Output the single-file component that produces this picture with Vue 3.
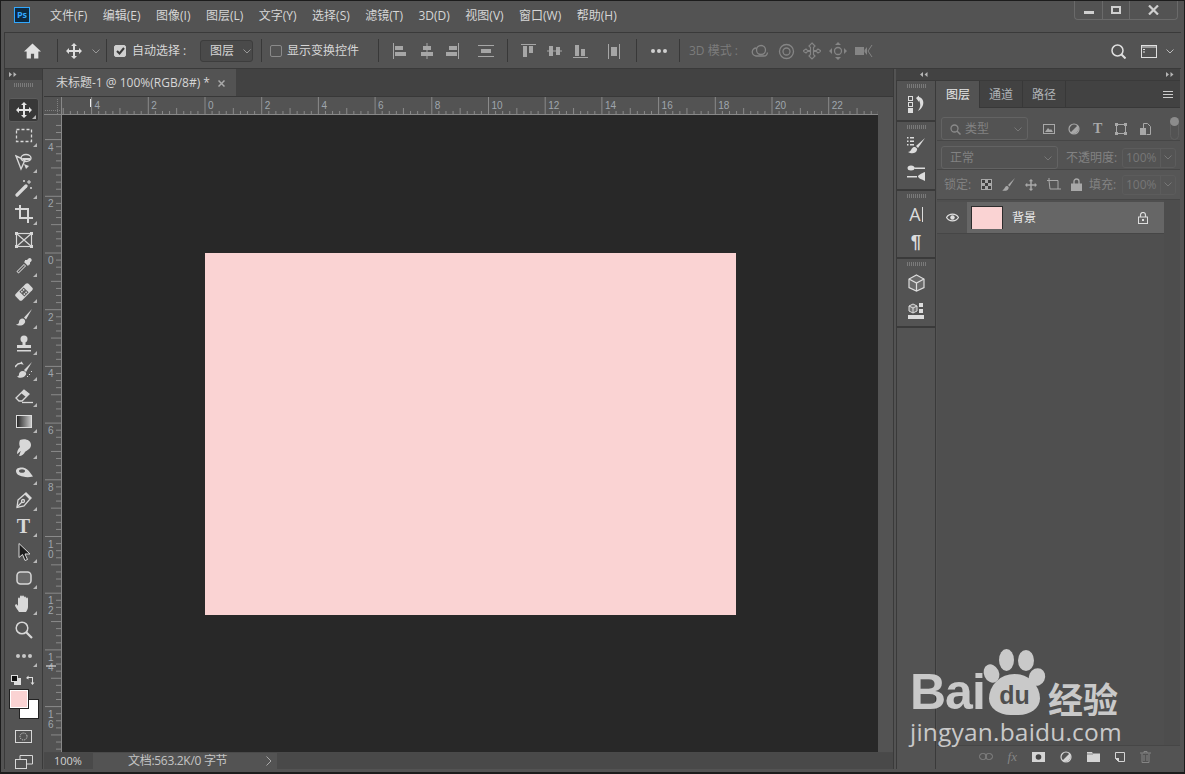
<script setup>
const menus = ["文件(F)", "编辑(E)", "图像(I)", "图层(L)", "文字(Y)", "选择(S)", "滤镜(T)", "3D(D)", "视图(V)", "窗口(W)", "帮助(H)"];

// ruler: 28.35px per cm, one tick every quarter cm
const CM = 28.35;
const hTicks = [];
for (let i = -20; i <= 95; i++) {
  hTicks.push({ x: 143 + (i * CM) / 4, major: i % 8 === 0, mid: i % 4 === 0, label: Math.abs(i / 4) });
}
const vTicks = [];
for (let i = -18; i <= 71; i++) {
  const label = String(Math.abs(i / 4));
  vTicks.push({ y: 138 + (i * CM) / 4, major: i % 8 === 0, mid: i % 4 === 0, digits: label.split("") });
}
</script>

<template>
  <div class="window">
    <!-- Menu -->
    <header class="menubar">
      <div class="ps-logo">Ps</div>
      <nav class="menus">
        <span v-for="m in menus" :key="m">{{ m }}</span>
      </nav>
      <div class="win-controls">
        <div class="win-btn min"><i></i></div>
        <div class="win-btn max"><i></i></div>
        <div class="win-btn close">
          <svg width="11" height="10" viewBox="0 0 11 10"><path d="M1 0.5l9 9M10 0.5l-9 9" stroke="#cfcfcf" stroke-width="2.2" /></svg>
        </div>
      </div>
    </header>

    <!-- Options bar -->
    <section class="options">
      <div class="opt home">
        <svg width="17" height="16" viewBox="0 0 16 15"><path d="M8 0.5L0 8h2.5v6.500h4V10h3v4.500h4V8H16z" fill="#e0e0e0" /></svg>
      </div>
      <div class="opt move">
        <svg width="16" height="16" viewBox="0 0 16 16"><path d="M8 0l3 3H9v4h4V5l3 3-3 3V9H9v4h2l-3 3-3-3h2V9H3v2L0 8l3-3v2h4V3H5z" fill="#dcdcdc" /></svg>
        <svg class="chev" width="8" height="5" viewBox="0 0 8 5"><path d="M0.500 0.500L4 4l3.500-3.500" fill="none" stroke="#999" /></svg>
      </div>
      <div class="opt auto">
        <span class="check on">
          <svg width="9" height="8" viewBox="0 0 9 8"><path d="M1 4l2.500 2.500L8 1" fill="none" stroke="#3a3a3a" stroke-width="2" /></svg>
        </span>
        <span class="auto-label">自动选择 :</span>
        <div class="select">图层
          <svg width="8" height="5" viewBox="0 0 8 5"><path d="M0.500 0.500L4 4l3.500-3.500" fill="none" stroke="#999" /></svg>
        </div>
      </div>
      <div class="opt transform">
        <span class="check"></span>
        <span>显示变换控件</span>
      </div>
      <div class="opt aligns one">
        <svg width="14" height="16" viewBox="0 0 14 16"><path d="M0.500 0v16" stroke="#a6a6a6" /><path d="M2 3h8v4H2zM2 9h11v4H2z" fill="#a6a6a6" /></svg>
        <svg width="14" height="16" viewBox="0 0 14 16"><path d="M7 0v16" stroke="#a6a6a6" /><path d="M3 3h8v4H3zM1 9h12v4H1z" fill="#a6a6a6" /></svg>
        <svg width="14" height="16" viewBox="0 0 14 16"><path d="M13.500 0v16" stroke="#a6a6a6" /><path d="M4 3h8v4H4zM1 9h11v4H1z" fill="#a6a6a6" /></svg>
        <svg width="16" height="14" viewBox="0 0 16 14"><path d="M0 1.500h16M0 12.500h16" stroke="#a6a6a6" /><path d="M3 5h10v4H3z" fill="#a6a6a6" /></svg>
      </div>
      <div class="opt aligns two">
        <svg width="15" height="14" viewBox="0 0 15 14"><path d="M0 0.500h15" stroke="#a6a6a6" /><path d="M2 2h4v11H2zM8 2h4v7H8z" fill="#a6a6a6" /></svg>
        <svg width="15" height="14" viewBox="0 0 15 14"><path d="M0 7h15" stroke="#a6a6a6" /><path d="M2 2h4v10H2zM9 3h4v8H9z" fill="#a6a6a6" /></svg>
        <svg width="15" height="14" viewBox="0 0 15 14"><path d="M0 13.500h15" stroke="#a6a6a6" /><path d="M2 1h4v11H2zM8 5h4v7H8z" fill="#a6a6a6" /></svg>
        <svg width="12" height="15" viewBox="0 0 12 15"><path d="M0.500 0v15M11.500 0v15" stroke="#a6a6a6" /><path d="M3 3h6v9H3z" fill="#a6a6a6" /></svg>
      </div>
      <div class="opt more">
        <i></i><i></i><i></i>
      </div>
      <div class="opt mode3d">
        <span>3D 模式 :</span>
        <svg width="20" height="16" viewBox="0 0 20 16"><g fill="none" stroke="#858585" stroke-width="1.300"><circle cx="12" cy="7" r="4.500" /><path d="M7.500 5A4 4 0 1 0 7 13h8a3.500 3.500 0 0 0 3.500-3.500" /></g></svg>
        <svg width="18" height="18" viewBox="0 0 18 18"><g fill="none" stroke="#858585" stroke-width="1.300"><circle cx="9.500" cy="9.500" r="7" /><circle cx="9.500" cy="9.500" r="3.500" /></g></svg>
        <svg width="18" height="18" viewBox="0 0 18 18"><path d="M9 1l3 3-1.500 1.500v3h3L15 7l3 2-3 2-1.500-1.500h-3v3L12 14l-3 3-3-3 1.500-1.500v-3h-3L3 11 0 9l3-2 1.500 1.500h3v-3L6 4z" fill="none" stroke="#858585" stroke-width="1.200" /></svg>
        <svg width="18" height="18" viewBox="0 0 18 18"><g fill="#858585"><path d="M9 0l3 3H6zM9 18l-3-3h6zM0 9l3-3v6zM18 9l-3 3V6z" /></g><circle cx="9" cy="9" r="3.500" fill="none" stroke="#858585" stroke-width="1.300" /></svg>
        <svg width="18" height="14" viewBox="0 0 18 14"><path d="M0 3h9v8H0zM9.500 6L12 3v8L9.500 8z" fill="#858585" /><path d="M17 1l-4 6 4 6" fill="none" stroke="#858585" /></svg>
      </div>
      <div class="opt right">
        <svg width="15" height="15" viewBox="0 0 15 15"><circle cx="6.500" cy="6.500" r="5.500" fill="none" stroke="#e0e0e0" stroke-width="1.500" /><path d="M10.500 10.500L14.500 14.500" stroke="#e0e0e0" stroke-width="2" /></svg>
        <svg width="16" height="13" viewBox="0 0 16 13"><rect x="0.500" y="0.500" width="15" height="12" fill="none" stroke="#e0e0e0" /><path d="M0 2h16" stroke="#e0e0e0" /><path d="M2 4h2v1H2zM2 6.500h2v1H2z" fill="#e0e0e0" /></svg>
        <svg class="right-chev" width="8" height="5" viewBox="0 0 8 5"><path d="M0.500 0.500L4 4l3.500-3.500" fill="none" stroke="#bbb" /></svg>
      </div>
    </section>

    <div class="workspace">
      <!-- Tools -->
      <aside class="toolbar">
        <div class="collapse-row left">
          <svg width="8" height="5" viewBox="0 0 8 5"><path d="M0 0l3 2.500L0 5zM4.500 0l3 2.500-3 2.500z" fill="#b5b5b5" /></svg>
        </div>
        <div class="grip"></div>
        <div class="tool active caret">
          <svg viewBox="0 0 16 16" width="16" height="16"><path d="M8 0l3 3H9v4h4V5l3 3-3 3V9H9v4h2l-3 3-3-3h2V9H3v2L0 8l3-3v2h4V3H5z" /></svg>
        </div>
        <div class="tool caret">
          <svg viewBox="0 0 18 18" width="18" height="18"><rect x="1.500" y="2.500" width="15" height="12" fill="none" stroke="#d8d8d8" stroke-width="1.300" stroke-dasharray="3 2" /></svg>
        </div>
        <div class="tool caret">
          <svg viewBox="0 0 18 18" width="18" height="18"><g fill="none" stroke="#d8d8d8" stroke-width="1.400"><path d="M1 3l9 4-4 9z" /><ellipse cx="11" cy="5" rx="5" ry="3.500" /></g><path d="M8 5h7v2H8z" fill="#d8d8d8" /><path d="M9 11l5 2-3 3z" fill="#d8d8d8" /></svg>
        </div>
        <div class="tool caret">
          <svg viewBox="0 0 18 18" width="18" height="18"><path d="M2 16L11 7" stroke="#d8d8d8" stroke-width="3.200" stroke-linecap="round" /><path d="M14 1v4M12 3h4M9 1v2M8 2h2M16 8v2M15 9h2" stroke="#d8d8d8" /></svg>
        </div>
        <div class="tool caret">
          <svg viewBox="0 0 18 18" width="18" height="18"><path d="M5 0v13h13M0 4h13v14" fill="none" stroke="#d8d8d8" stroke-width="2" /></svg>
        </div>
        <div class="tool">
          <svg viewBox="0 0 18 18" width="18" height="18"><g fill="none" stroke="#d8d8d8" stroke-width="1.200"><rect x="1.500" y="2.500" width="15" height="13" /><path d="M1.500 2.500l15 13M16.500 2.500l-15 13" /></g><path d="M0 1h3v3H0zM15 1h3v3h-3zM0 14h3v3H0zM15 14h3v3h-3z" fill="#d8d8d8" /></svg>
        </div>
        <div class="tool caret">
          <svg viewBox="0 0 18 18" width="18" height="18"><path d="M2.500 15.500L10 8" stroke="#d8d8d8" stroke-width="3" fill="none" /><path d="M3 15L9.500 8.500" stroke="#555" stroke-width="1.200" /><path d="M9 5l4 4 1-1.500 1 0 0-2 1.500-1.500c1-2-1.500-4-3-2.500L12 3l-2 0 0 1z" fill="#d8d8d8" /></svg>
        </div>
        <div class="tool caret">
          <svg viewBox="0 0 18 18" width="18" height="18"><g transform="rotate(-45 9 9)"><rect x="0" y="4.500" width="18" height="9" rx="2" fill="#d8d8d8" /><rect x="6" y="5.500" width="6" height="7" fill="#5a5a5a" /><path d="M7 6.500h1.500V8H7zM9.500 6.500H11V8H9.500zM7 10h1.500v1.500H7zM9.500 10H11v1.500H9.500z" fill="#d8d8d8" /></g></svg>
        </div>
        <div class="tool caret">
          <svg viewBox="0 0 18 18" width="18" height="18"><path d="M17 0L9 8.500l2 2z" fill="#d8d8d8" /><path d="M8 9.500c-3 0-4 2-4 3.500 0 1.500-1 2.500-3 2.500 2 1.500 7 2 9-2 .5-1.500 0-3-2-4z" fill="#d8d8d8" /></svg>
        </div>
        <div class="tool caret">
          <svg viewBox="0 0 18 18" width="18" height="18"><circle cx="9" cy="4" r="3.500" fill="#d8d8d8" /><path d="M7.500 6h3v4h-3zM2 10h14v3H2zM2 15h14v1.500H2z" fill="#d8d8d8" /></svg>
        </div>
        <div class="tool caret">
          <svg viewBox="0 0 18 18" width="18" height="18"><path d="M17 1L9 9l2 2z" fill="#d8d8d8" /><path d="M8 10c-3 0-4 2-4 3.500 0 1-1 2-2 2 2 2 7 2 9-2 .5-1.500 0-3-3-3.500z" fill="#d8d8d8" /><path d="M0 6c2-3 5-4 7-3.500L6 1" fill="none" stroke="#d8d8d8" stroke-width="1.500" /><path d="M14 13h1v1h-1zM16 10h1v1h-1zM12 15h1v1h-1z" fill="#d8d8d8" /></svg>
        </div>
        <div class="tool caret">
          <svg viewBox="0 0 18 18" width="18" height="18"><path d="M1 11l8-8 5 4-7 7H4z" fill="none" stroke="#d8d8d8" stroke-width="1.300" /><path d="M6 6l3-3 5 4-3 3z" fill="#d8d8d8" /><path d="M7 15.500h11" stroke="#d8d8d8" stroke-width="1.300" /></svg>
        </div>
        <div class="tool caret">
          <svg viewBox="0 0 18 18" width="18" height="18"><defs><linearGradient id="grad"><stop offset="0" stop-color="#222" /><stop offset="1" stop-color="#ccc" /></linearGradient></defs><rect x="1.500" y="2.500" width="15" height="12" fill="url(#grad)" stroke="#ddd" /></svg>
        </div>
        <div class="tool caret">
          <svg viewBox="0 0 18 18" width="18" height="18"><path d="M5 1c5-2 11 0 11 5 0 4-4 5-6 7-1 2-3 4-6 4 1-2 1-4 2-5-1 0-3 3-4 3 0-3 1-5 3-7-1-2-1-5 0-7z" fill="#d8d8d8" /></svg>
        </div>
        <div class="tool caret">
          <svg viewBox="0 0 18 18" width="18" height="18"><path d="M1 6c0-3 4-4 7-3.500 3 .5 6 3 7 5 1 1 2 3 3 4-4 1-7 1-10 0C4 11 1 9 1 6z" fill="#d8d8d8" /><ellipse cx="7" cy="6" rx="3" ry="1.800" fill="#555" /></svg>
        </div>
        <div class="tool caret">
          <svg viewBox="0 0 18 18" width="18" height="18"><g fill="none" stroke="#d8d8d8" stroke-width="1.300"><path d="M3 9l7-6 5 5-6 7-7 1.500z" /><path d="M2 16l5-5" /><circle cx="8" cy="10" r="1.500" /></g><path d="M11 1l6 6-1.500 1.500-6-6z" fill="#d8d8d8" /></svg>
        </div>
        <div class="tool caret type-tool">T</div>
        <div class="tool caret">
          <svg viewBox="0 0 18 18" width="18" height="18"><path d="M4 0.500v14l3.500-3 2.500 6 2.500-1-2.500-5.500H15z" fill="#1d1d1d" stroke="#d8d8d8" /></svg>
        </div>
        <div class="tool caret">
          <svg viewBox="0 0 18 18" width="18" height="18"><rect x="2" y="3" width="14" height="12" rx="3.500" fill="#6a6a6a" stroke="#d8d8d8" stroke-width="1.500" /></svg>
        </div>
        <div class="tool caret">
          <svg viewBox="0 0 18 18" width="18" height="18"><path d="M4 17c-1-2-4-5-4-7 1-1 2-1 3 1V4c0-2 2-2 2 0V2c0-2 2-2 2 0v0c0-2 2-2 2 0v1c0-2 2-2 2 0v1c0-2 2-2 2 0v8c0 2-1 3-2 5z" fill="#d8d8d8" /></svg>
        </div>
        <div class="tool">
          <svg viewBox="0 0 18 18" width="18" height="18"><circle cx="7" cy="7" r="5.800" fill="none" stroke="#d8d8d8" stroke-width="1.500" /><path d="M11 11l6 6" stroke="#d8d8d8" stroke-width="2.200" /></svg>
        </div>
        <div class="tool caret">
          <svg viewBox="0 0 18 18" width="18" height="18"><circle cx="3" cy="9" r="2" fill="#c8c8c8" /><circle cx="9" cy="9" r="2" fill="#c8c8c8" /><circle cx="15" cy="9" r="2" fill="#c8c8c8" /></svg>
        </div>
        <div class="mini-colors">
          <svg width="10" height="10" viewBox="0 0 10 10"><rect x="3" y="3" width="7" height="7" fill="#ddd" /><rect x="0.500" y="0.500" width="6" height="6" fill="#111" stroke="#ddd" /></svg>
          <svg width="11" height="11" viewBox="0 0 11 11"><path d="M0 3l2.500-2.500V2H7v5.500h1.500L6.500 10l-2-2.500H6V3H2.500v1.500z" fill="#ddd" /></svg>
        </div>
        <div class="swatches">
          <span class="swatch bg"></span>
          <span class="swatch fg"></span>
        </div>
        <div class="tool mask">
          <svg viewBox="0 0 18 14" width="18" height="14"><rect x="0.500" y="0.500" width="16" height="12" fill="none" stroke="#d8d8d8" /><circle cx="8.500" cy="6.500" r="3.500" fill="none" stroke="#d8d8d8" stroke-dasharray="1 1" /></svg>
        </div>
        <div class="tool screen">
          <svg viewBox="0 0 18 14" width="18" height="14"><rect x="0.500" y="4.500" width="11" height="9" fill="none" stroke="#d8d8d8" /><path d="M5 4V0.500h12.500V9H12" fill="none" stroke="#d8d8d8" /></svg>
        </div>
      </aside>

      <!-- Document -->
      <main class="document">
        <div class="doc-tabs">
          <div class="doc-tab">
            <span>未标题-1 @ 100%(RGB/8#) *</span>
            <svg width="7" height="7" viewBox="0 0 7 7"><path d="M0.500 0.500l6 6M6.500 0.500l-6 6" stroke="#aaa" stroke-width="1.500" /></svg>
          </div>
        </div>

        <div class="ruler-top">
          <div class="corner">
            <svg width="17" height="17" viewBox="0 0 17 17"><path d="M1 13.500h16M13.500 2v15" stroke="#808080" stroke-dasharray="1 1" /></svg>
          </div>
          <svg class="h-ruler" width="816" height="18">
            <g v-for="t in hTicks" :key="t.x">
              <line :x1="t.x" :x2="t.x" :y1="t.major ? 0 : t.mid ? 11 : 14" y2="17" stroke="#8a8a8a" />
              <text v-if="t.major" :x="t.x + 3" y="12" class="ruler-num">{{ t.label }}</text>
            </g>
            <line x1="0" x2="816" y1="17.500" y2="17.500" stroke="#888" />
            <line x1="28.500" x2="28.500" y1="2" y2="10" stroke="#eee" />
          </svg>
        </div>

        <div class="doc-middle">
          <svg class="v-ruler" width="18" height="638">
            <g v-for="t in vTicks" :key="t.y">
              <line :x1="t.major ? 1 : t.mid ? 7 : 12" x2="17" :y1="t.y" :y2="t.y" stroke="#8a8a8a" />
              <template v-if="t.major">
                <text v-for="(d, i) in t.digits" :key="i" x="4" :y="t.y + 11 + i * 10" class="ruler-num">{{ d }}</text>
              </template>
            </g>
            <line x1="17.500" x2="17.500" y1="0" y2="638" stroke="#888" />
            <line x1="2" x2="12" y1="551" y2="551" stroke="#eee" />
          </svg>
          <div class="canvas">
            <div class="artboard"></div>
          </div>
          <div class="scrollbar"></div>
        </div>

        <footer class="status">
          <span class="zoom-level">100%</span>
          <div class="doc-size">
            <span>文档:563.2K/0 字节</span>
            <svg width="6" height="10" viewBox="0 0 6 10"><path d="M0.500 0.500L5 5 0.500 9.500" fill="none" stroke="#aaa" /></svg>
          </div>
        </footer>
      </main>

      <!-- Panels -->
      <div class="dock">
        <div class="collapse-row dock-head">
          <svg width="8" height="5" viewBox="0 0 8 5"><path d="M3 0L0 2.500 3 5zM7.500 0l-3 2.500 3 2.500z" fill="#b5b5b5" /></svg>
          <svg width="8" height="5" viewBox="0 0 8 5"><path d="M0 0l3 2.500L0 5zM4.500 0l3 2.500-3 2.500z" fill="#b5b5b5" /></svg>
        </div>
        <div class="dock-body">
          <aside class="strip">
            <div class="strip-group first">
              <div class="grip"></div>
              <svg width="18" height="18" viewBox="0 0 18 18"><g fill="none" stroke="#ddd"><rect x="1.500" y="1.500" width="4" height="4" /><rect x="1.500" y="7.500" width="4" height="4" /></g><path d="M1 13h5v5H1z" fill="#ddd" /><path d="M9 3l3-2.500V2c4 1 5 5 4 8-1 3-3 5-5 6 1-2 3-4 2-8-.5-2-1-3-1-3v2z" fill="#ddd" /></svg>
            </div>
            <div class="strip-group second">
              <div class="grip"></div>
              <svg width="18" height="18" viewBox="0 0 18 18"><path d="M0 1h1.500v1.500H0zM3 1h4v1.500H3zM0 4.500h1.500V6H0zM3 4.500h4V6H3zM0 8h1.500v1.500H0zM3 8h4v1.500H3z" fill="#ddd" /><path d="M18 2L9 10l2 2z" fill="#ddd" /><path d="M8 11c-3 0-3 2-4 3-.5 1-2 2-3 2 3 2 8 2 9-2 .5-1 0-2-2-3z" fill="#ddd" /></svg>
              <svg width="18" height="18" viewBox="0 0 18 18"><path d="M5 3.500h13v1.500H8z" fill="#ddd" /><ellipse cx="4" cy="4" rx="3.500" ry="2.500" fill="#ddd" /><path d="M0 12h10v1.500H0z" fill="#ddd" /><path d="M18 8v9l-3-1.500c-2-.5-4-2-4-3 0-1 3-3 7-4.500z" fill="#ddd" /></svg>
            </div>
            <div class="strip-group third">
              <div class="grip"></div>
              <div class="char-icon"><span>A</span><i></i></div>
              <div class="para-icon">¶</div>
            </div>
            <div class="strip-group fourth">
              <div class="grip"></div>
              <svg width="17" height="18" viewBox="0 0 17 18"><path d="M8.500 1L16 5v8.500L8.500 17 1 13.500V5z" fill="#6a6a6a" stroke="#ddd" stroke-width="1.200" /><path d="M1 5l7.500 4L16 5M8.500 9v8" fill="none" stroke="#ddd" stroke-width="1.200" /></svg>
              <svg width="16" height="16" viewBox="0 0 16 16"><path d="M5 1l4 2v5l-4 2-4-2V3z" fill="#777" stroke="#ddd" /><path d="M1 3l4 2 4-2M5 5v5" fill="none" stroke="#ddd" /><path d="M11 0h4v4h-4zM11 6h4v4h-4zM0 12h16v4H0z" fill="#ddd" /></svg>
            </div>
          </aside>

          <section class="panel">
            <div class="panel-tabs">
              <span class="panel-tab active">图层</span>
              <span class="panel-tab">通道</span>
              <span class="panel-tab">路径</span>
              <div class="tab-fill">
                <svg width="10" height="7" viewBox="0 0 10 7"><path d="M0 0.500h10M0 3.500h10M0 6.500h10" stroke="#ccc" /></svg>
              </div>
            </div>

            <div class="row filter">
              <div class="field search">
                <svg width="11" height="11" viewBox="0 0 11 11"><circle cx="4.500" cy="4.500" r="3.500" fill="none" stroke="#8a8a8a" stroke-width="1.300" /><path d="M7 7l3.500 3.500" stroke="#8a8a8a" stroke-width="1.500" /></svg>
                <span>类型</span>
                <svg class="field-chev" width="8" height="5" viewBox="0 0 8 5"><path d="M0.500 0.500L4 4l3.500-3.500" fill="none" stroke="#777" /></svg>
              </div>
              <div class="filter-icons">
                <svg width="12" height="10" viewBox="0 0 12 10"><rect x="0.500" y="0.500" width="11" height="9" fill="none" stroke="#a8a8a8" /><path d="M2 8l3-4 2 2 1-1 2 3z" fill="#a8a8a8" /></svg>
                <svg width="12" height="12" viewBox="0 0 12 12"><circle cx="6" cy="6" r="5" fill="none" stroke="#a8a8a8" stroke-width="1.200" /><path d="M9.500 2.500A5 5 0 0 1 2.500 9.500z" fill="#a8a8a8" /></svg>
                <span class="filter-t">T</span>
                <svg width="12" height="12" viewBox="0 0 12 12"><rect x="1.500" y="1.500" width="9" height="9" fill="none" stroke="#a8a8a8" /><path d="M0 0h3v3H0zM9 0h3v3H9zM0 9h3v3H0zM9 9h3v3H9z" fill="#a8a8a8" /></svg>
                <svg width="11" height="12" viewBox="0 0 11 12"><path d="M3.500 5V0.500h4l3 3v8h-4" fill="none" stroke="#a8a8a8" /><path d="M0 5h6v7H0z" fill="#a8a8a8" /></svg>
              </div>
              <div class="toggle"><i></i></div>
            </div>

            <div class="row blend">
              <div class="field mode">正常
                <svg class="field-chev" width="8" height="5" viewBox="0 0 8 5"><path d="M0.500 0.500L4 4l3.500-3.500" fill="none" stroke="#777" /></svg>
              </div>
              <span class="row-label">不透明度:</span>
              <div class="percent"><span>100%</span>
                <svg width="8" height="5" viewBox="0 0 8 5"><path d="M0.500 0.500L4 4l3.500-3.500" fill="none" stroke="#777" /></svg>
              </div>
            </div>

            <div class="row locks">
              <span class="row-label lock-label">锁定:</span>
              <div class="lock-icons">
                <svg width="11" height="11" viewBox="0 0 11 11"><rect width="11" height="11" fill="#a8a8a8" /><path d="M1 1h3v3H1zM7 1h3v3H7zM4 4h3v3H4zM1 7h3v3H1zM7 7h3v3H7z" fill="#3f3f3f" /></svg>
                <svg width="13" height="13" viewBox="0 0 13 13"><path d="M13 0L6 7l1.500 1.500z" fill="#a8a8a8" /><path d="M5 8c-2 0-2 2-3 3-.3.500-1 1-2 1 2 1.500 6 1 6.500-1.500C7 9.500 6.500 8.500 5 8z" fill="#a8a8a8" /></svg>
                <svg width="12" height="12" viewBox="0 0 16 16"><path d="M8 0l3 3H9v4h4V5l3 3-3 3V9H9v4h2l-3 3-3-3h2V9H3v2L0 8l3-3v2h4V3H5z" fill="#a8a8a8" /></svg>
                <svg width="14" height="13" viewBox="0 0 14 13"><path d="M2 2.500h9V11M0 2.500h2M11 11h3M2 0v2.500l1 8.500h8" fill="none" stroke="#a8a8a8" /></svg>
                <svg width="11" height="13" viewBox="0 0 11 13"><path d="M3 6V3.500a2.500 2.500 0 0 1 5 0V6" fill="none" stroke="#a8a8a8" stroke-width="1.400" /><path d="M0 5.500h11V13H0z" fill="#a8a8a8" /></svg>
              </div>
              <span class="row-label fill-label">填充:</span>
              <div class="percent"><span>100%</span>
                <svg width="8" height="5" viewBox="0 0 8 5"><path d="M0.500 0.500L4 4l3.500-3.500" fill="none" stroke="#777" /></svg>
              </div>
            </div>

            <div class="layers">
              <div class="layer-list">
                <div class="layer">
                  <div class="eye">
                    <svg width="13" height="9" viewBox="0 0 13 9"><path d="M0.500 4.500C3 0 10 0 12.500 4.500 10 9 3 9 0.500 4.500z" fill="none" stroke="#e0e0e0" stroke-width="1.200" /><circle cx="6.500" cy="4.500" r="2.200" fill="#e0e0e0" /></svg>
                  </div>
                  <div class="layer-main">
                    <div class="thumb"></div>
                    <span class="layer-name">背景</span>
                    <svg class="layer-lock" width="10" height="12" viewBox="0 0 10 12"><path d="M2.500 5V3a2.500 2.500 0 0 1 5 0v2" fill="none" stroke="#ddd" stroke-width="1.200" /><rect x="0.500" y="5" width="9" height="6.500" fill="none" stroke="#ddd" /><rect x="4" y="7" width="2" height="2" fill="#ddd" /></svg>
                  </div>
                </div>
              </div>
              <div class="layer-scroll"></div>
            </div>

            <footer class="panel-foot">
              <svg width="14" height="7" viewBox="0 0 14 7"><g fill="none" stroke="#858585"><rect x="0.500" y="0.500" width="7" height="6" rx="3" /><rect x="6.500" y="0.500" width="7" height="6" rx="3" /></g></svg>
              <span class="fx">fx</span>
              <svg width="13" height="10" viewBox="0 0 13 10"><rect width="13" height="10" fill="#d4d4d4" /><circle cx="6.500" cy="5" r="2.800" fill="#444" /></svg>
              <svg width="12" height="12" viewBox="0 0 12 12"><circle cx="6" cy="6" r="5" fill="none" stroke="#d4d4d4" stroke-width="1.200" /><path d="M9.500 2.500A5 5 0 0 1 2.500 9.500z" fill="#d4d4d4" /></svg>
              <svg width="13" height="10" viewBox="0 0 13 10"><path d="M0 0h5l1 1.500h7V10H0z" fill="#d4d4d4" /><path d="M0 2h6" stroke="#4f4f4f" stroke-width="0.600" /></svg>
              <svg width="10" height="10" viewBox="0 0 10 10"><path d="M0.500 0.500h9v9H3.500l-3-3z" fill="none" stroke="#d4d4d4" /><path d="M0 6h4v4z" fill="#d4d4d4" /></svg>
              <svg width="11" height="12" viewBox="0 0 11 12"><path d="M2 2.500V11.500h7V2.500M0 2h11M4 2V0.500h3V2M4 4v6M7 4v6" fill="none" stroke="#858585" /></svg>
            </footer>
          </section>
        </div>
      </div>
    </div>

    <!-- Watermark -->
    <div class="watermark">
      <div class="wm-top">
        <span class="wm-bai">Bai</span>
        <div class="wm-paw">
          <i class="toe a"></i><i class="toe b"></i><i class="toe c"></i><i class="toe d"></i>
          <div class="palm">du</div>
        </div>
        <span class="wm-cn">经验</span>
      </div>
      <div class="wm-url">jingyan.baidu.com</div>
    </div>
  </div>
</template>

<style>
html, body {
  margin: 0;
  background: #535353;
}
</style>

<style scoped>
* {
  box-sizing: border-box;
}

.window {
  position: relative;
  width: 1185px;
  height: 774px;
  overflow: hidden;
  display: flex;
  flex-direction: column;
  background: #535353;
  border: 1px solid #1c1c1c;
  border-bottom-width: 2px;
  color: #d6d6d6;
  font: 12px/1 "Open Sans", "Noto Sans CJK SC", sans-serif;
}

svg {
  display: block;
  flex: none;
}

/* Menu */
.menubar {
  height: 31px;
  display: flex;
  align-items: flex-start;
  flex: none;
}

.ps-logo {
  width: 16px;
  height: 16px;
  margin: 6px 0 0 13px;
  border: 1px solid #31a8ff;
  background: #0d2a42;
  color: #31a8ff;
  font-size: 9px;
  font-weight: 700;
  line-height: 14px;
  text-align: center;
}

.menus {
  display: flex;
  gap: 15.5px;
  margin: 9px 0 0 20px;
}

.win-controls {
  display: flex;
  width: 104px;
  height: 19px;
  margin: 0 6px 0 auto;
  border: 1px solid #6a6a6a;
  border-top: none;
  border-radius: 0 0 4px 4px;
}

.win-btn {
  display: flex;
  align-items: center;
  justify-content: center;
  border-right: 1px solid #6a6a6a;
}

.win-btn.min {
  width: 28px;
}

.win-btn.min i {
  width: 10px;
  height: 3px;
  margin-top: 5px;
  background: #cfcfcf;
}

.win-btn.max {
  width: 27px;
}

.win-btn.max i {
  width: 10px;
  height: 8px;
  border: 2px solid #cfcfcf;
}

.win-btn.close {
  flex: 1;
  border-right: none;
}

/* Options bar */
.options {
  flex: none;
  height: 37px;
  margin: 0 3px;
  padding-top: 1px;
  display: flex;
  align-items: center;
  border-top: 1px solid #3a3a3a;
  border-bottom: 1px solid #3a3a3a;
  border-left: 1px solid #3a3a3a;
}

.opt {
  position: relative;
  height: 100%;
  display: flex;
  align-items: center;
}

.opt:not(.right)::after {
  content: "";
  position: absolute;
  right: 0;
  top: 5px;
  bottom: 6px;
  width: 1px;
  background: #383838;
}

.opt.home {
  width: 53px;
  padding-left: 19px;
}

.opt.move {
  width: 49px;
  padding-left: 8px;
}

.chev {
  margin-left: 10px;
}

.opt.auto {
  width: 155px;
  padding-left: 7px;
}

.check {
  width: 12px;
  height: 12px;
  display: flex;
  align-items: center;
  justify-content: center;
  border-radius: 2px;
  border: 1px solid #8a8a8a;
}

.check.on {
  background: #cfcfcf;
  border-color: #cfcfcf;
}

.auto-label {
  margin-left: 6px;
  width: 68px;
  white-space: nowrap;
}

.select {
  width: 53px;
  height: 22px;
  padding-left: 9px;
  display: flex;
  align-items: center;
  gap: 9px;
  border: 1px solid #3d3d3d;
  border-radius: 3px;
  background: #4a4a4a;
}

.opt.transform {
  width: 117px;
  padding-left: 8px;
  gap: 5px;
}

.aligns {
  display: grid;
  align-content: center;
}

.aligns.one {
  width: 129px;
  padding-left: 14px;
  grid-template-columns: 27px 25px 33px 18px;
}

.aligns.two {
  width: 129px;
  padding-left: 13px;
  grid-template-columns: 26px 26px 35px 18px;
}

.opt.more {
  width: 43px;
  justify-content: center;
  gap: 2px;
}

.opt.more i {
  width: 4px;
  height: 4px;
  border-radius: 50%;
  background: #d0d0d0;
}

.opt.mode3d {
  padding-left: 9px;
  color: #7c7c7c;
}

.opt.mode3d::after {
  display: none;
}

.opt.mode3d span {
  width: 60px;
  white-space: nowrap;
}

.opt.mode3d svg {
  margin-right: 8px;
}

.opt.right {
  margin-left: auto;
  padding-right: 7px;
  gap: 15px;
}

.right-chev {
  margin-left: -6px;
}

/* Workspace */
.workspace {
  flex: 1;
  display: flex;
  min-height: 0;
  padding: 0 4px 3px 3px;
}

.toolbar {
  width: 39px;
  flex: none;
  border-left: 1px solid #3a3a3a;
  border-right: 1px solid #3a3a3a;
  display: flex;
  flex-direction: column;
  align-items: center;
}

.collapse-row {
  height: 11px;
  width: 100%;
  flex: none;
  display: flex;
  align-items: center;
  background: #424242;
  padding-left: 4px;
}

.grip {
  width: 19px;
  height: 4px;
  flex: none;
  margin: 3px auto 0;
  background: repeating-linear-gradient(90deg, #7a7a7a 0 1px, transparent 1px 2px);
}

.tool {
  position: relative;
  width: 31px;
  height: 26px;
  flex: none;
  display: flex;
  align-items: center;
  justify-content: center;
}

.tool.active {
  height: 24px;
  margin: 11px 0 1px;
  background: #383838;
  border: 1px solid #5c5c5c;
  border-radius: 3px;
}

.tool.active path {
  fill: #e4e4e4;
}

.caret::after {
  content: "";
  position: absolute;
  right: 2px;
  bottom: 2px;
  border-left: 4px solid transparent;
  border-bottom: 4px solid #b8b8b8;
}

.type-tool {
  font: 700 20px/1 "Liberation Serif", serif;
  color: #d8d8d8;
}

.mini-colors {
  display: flex;
  flex: none;
  justify-content: space-between;
  width: 26px;
  margin-top: 6px;
}

.swatches {
  position: relative;
  width: 30px;
  height: 30px;
  margin-top: 3px;
  flex: none;
}

.swatch {
  position: absolute;
  width: 20px;
  height: 20px;
  border: 1px solid #222;
  outline: 1px solid #fff;
  outline-offset: -2px;
}

.swatch.fg {
  left: 0;
  top: 0;
  background: #fad3d3;
}

.swatch.bg {
  left: 10px;
  top: 10px;
  background: #fff;
}

.tool.mask {
  height: 24px;
  margin-top: 6px;
}

.tool.screen {
  height: 26px;
  margin-top: 0;
}

/* Document */
.document {
  width: 850px;
  flex: none;
  margin-left: 1px;
  display: flex;
  flex-direction: column;
  border-right: 1px solid #3a3a3a;
}

.doc-tabs {
  height: 28px;
  flex: none;
  background: #424242;
  border-bottom: 1px solid #383838;
}

.doc-tab {
  width: 192px;
  height: 27px;
  display: flex;
  align-items: center;
  padding: 1px 0 0 12px;
  gap: 8px;
  background: #535353;
  white-space: nowrap;
}

.ruler-top {
  height: 18px;
  flex: none;
  display: flex;
}

.corner {
  width: 18px;
  flex: none;
  border-right: 1px solid #888;
  border-bottom: 1px solid #888;
}

.ruler-num {
  font: 10px "Liberation Sans", sans-serif;
  fill: #9fa6ad;
}

.doc-middle {
  flex: 1;
  display: flex;
  min-height: 0;
}

.canvas {
  width: 816px;
  flex: none;
  background: #282828;
}

.artboard {
  width: 531px;
  height: 362px;
  margin: 138px 0 0 143px;
  background: #fad3d3;
}

.scrollbar {
  flex: 1;
}

.status {
  height: 17px;
  flex: none;
  display: flex;
  align-items: center;
  background: #494949;
  border-top: 1px solid #4a4a4a;
}

.zoom-level {
  width: 49px;
  padding: 0 0 1px 10px;
  font-size: 11px;
  color: #d2d2d2;
}

.doc-size {
  width: 184px;
  height: 100%;
  display: flex;
  align-items: center;
  justify-content: space-between;
  padding: 0 5px 0 35px;
  background: #535353;
  color: #c4c4c4;
  letter-spacing: -0.3px;
}

/* Dock */
.dock {
  width: 284px;
  flex: none;
  margin-left: 2px;
  display: flex;
  flex-direction: column;
}

.dock-head {
  justify-content: space-between;
  padding: 0 6px 0 24px;
}

.dock-body {
  flex: 1;
  display: flex;
  min-height: 0;
  border-left: 1px solid #3a3a3a;
  border-top: 1px solid #3a3a3a;
}

.strip {
  width: 39px;
  flex: none;
  border-right: 1px solid #3a3a3a;
}

.strip-group {
  display: flex;
  flex-direction: column;
  align-items: center;
  border-bottom: 2px solid #3a3a3a;
}

.strip-group.first {
  height: 41px;
  gap: 7px;
}

.strip-group.second {
  height: 69px;
  gap: 10px;
}

.strip-group.second .grip,
.strip-group.fourth .grip {
  margin-bottom: -3px;
}

.strip-group.third {
  height: 68px;
  gap: 8px;
}

.strip-group.third .grip {
  margin-bottom: -2px;
}

.strip-group.fourth {
  height: 69px;
  gap: 11px;
}

.char-icon {
  display: flex;
  align-items: center;
  height: 20px;
  font: 18px/20px "Open Sans", sans-serif;
  color: #dcdcdc;
}

.char-icon i {
  width: 1px;
  height: 15px;
  margin-left: 1px;
  background: #dcdcdc;
}

.para-icon {
  height: 20px;
  font: 700 19px/20px "Liberation Sans", sans-serif;
  color: #dcdcdc;
}

.panel {
  flex: 1;
  margin-left: 1px;
  min-width: 0;
  display: flex;
  flex-direction: column;
  background: #535353;
}

.panel-tabs {
  display: flex;
  height: 27px;
  flex: none;
  background: #424242;
}

.panel-tab {
  width: 43px;
  height: 27px;
  line-height: 27px;
  text-align: center;
  color: #aeb2b6;
  border-right: 1px solid #383838;
  border-bottom: 1px solid #383838;
}

.panel-tab.active {
  background: #535353;
  color: #e8e8e8;
  border-bottom: none;
}

.tab-fill {
  flex: 1;
  display: flex;
  justify-content: flex-end;
  align-items: center;
  padding-right: 7px;
  border-bottom: 1px solid #383838;
}

.row {
  display: flex;
  align-items: center;
  flex: none;
  color: #828282;
  border-bottom: 1px solid #464646;
}

.field {
  position: relative;
  height: 23px;
  display: flex;
  align-items: center;
  border: 1px solid #636363;
  border-radius: 3px;
}

.field-chev {
  position: absolute;
  right: 5px;
  top: 9px;
}

.row.filter {
  height: 33px;
  padding: 9px 0 0 4px;
}

.search {
  width: 87px;
  padding: 1px 0 0 8px;
  gap: 4px;
}

.filter-icons {
  display: flex;
  align-items: center;
  width: 112px;
  margin-left: 15px;
  gap: 13px;
}

.filter-t {
  font: 700 14px/1 "Liberation Serif", serif;
  color: #a8a8a8;
}

.toggle {
  position: relative;
  width: 9px;
  height: 22px;
  margin-left: 15px;
  border: 1px solid #5f5f5f;
  border-radius: 5px;
}

.toggle i {
  position: absolute;
  left: -1px;
  top: -2px;
  width: 9px;
  height: 9px;
  border-radius: 50%;
  background: #8c8c8c;
}

.row.blend {
  height: 29px;
  padding: 5px 0 0 4px;
}

.mode {
  width: 117px;
  padding-left: 8px;
}

.row-label {
  margin-left: 8px;
  white-space: nowrap;
  width: 56px;
}

.percent {
  width: 54px;
  height: 20px;
  display: flex;
  align-items: center;
  justify-content: space-between;
  padding: 0 3px 0 3px;
  border: 1px solid #5c5c5c;
  border-radius: 3px;
  font-size: 12px;
  color: #777;
  background: linear-gradient(90deg, transparent 37px, #5c5c5c 37px 38px, transparent 38px);
}

.row.locks {
  height: 30px;
  padding-left: 4px;
  background: #565656;
}

.lock-label {
  margin-left: 3px;
  width: 37px;
}

.lock-icons {
  display: flex;
  align-items: center;
  width: 103px;
  gap: 10px;
}

.fill-label {
  margin-left: 5px;
  width: 33px;
}

.layers {
  flex: 1;
  display: flex;
  min-height: 0;
}

.layer-list {
  width: 227px;
  flex: none;
  padding-top: 2px;
  background: #4f4f4f;
}

.layer-scroll {
  flex: 1;
  background: #4d4d4d;
}

.layer {
  display: flex;
  height: 32px;
  background: #535353;
  border-bottom: 1px solid #464646;
}

.eye {
  width: 30px;
  display: flex;
  align-items: center;
  justify-content: center;
}

.layer-main {
  flex: 1;
  display: flex;
  align-items: center;
  background: #666;
  color: #ececec;
  padding-left: 4px;
}

.thumb {
  width: 32px;
  height: 23px;
  background: #fad3d3;
  border: 1px solid #2c2c2c;
  border-bottom: none;
}

.layer-name {
  margin: 1px 0 0 9px;
}

.layer-lock {
  margin-left: auto;
  margin-right: 16px;
}

.panel-foot {
  height: 24px;
  flex: none;
  display: flex;
  align-items: center;
  justify-content: flex-end;
  gap: 15px;
  padding: 0 29px 2px 0;
  background: #535353;
  border-top: 1px solid #464646;
}

.fx {
  font: italic 13px "Liberation Serif", serif;
  color: #858585;
}

/* Watermark overlay */
.watermark {
  position: absolute;
  left: 909px;
  top: 646px;
  width: 225px;
  color: #c9c9c9;
}

.wm-top {
  display: flex;
  align-items: flex-end;
  height: 68px;
}

.wm-bai {
  width: 74px;
  flex: none;
  font: 700 50px/46px "Liberation Sans", sans-serif;
  letter-spacing: -1px;
}

.wm-paw {
  position: relative;
  width: 60px;
  height: 68px;
  flex: none;
}

.toe {
  position: absolute;
  background: #c9c9c9;
  border-radius: 50%;
}

.toe.a {
  left: 0;
  top: 17px;
  width: 15px;
  height: 19px;
  transform: rotate(-25deg);
}

.toe.b {
  left: 15px;
  top: 2px;
  width: 15px;
  height: 22px;
}

.toe.c {
  left: 34px;
  top: 3px;
  width: 16px;
  height: 21px;
}

.toe.d {
  left: 45px;
  top: 21px;
  width: 16px;
  height: 18px;
  transform: rotate(25deg);
}

.palm {
  position: absolute;
  left: 5px;
  top: 27px;
  width: 51px;
  height: 41px;
  border-radius: 50% 50% 42% 42% / 60% 60% 40% 40%;
  background: #c9c9c9;
  color: #4f4f4f;
  font: 700 25px/42px "Liberation Sans", sans-serif;
  text-align: center;
}

.wm-cn {
  margin: 0 0 -2px 4px;
  font: 700 35px/38px "Noto Sans CJK SC", sans-serif;
  white-space: nowrap;
}

.wm-url {
  margin-top: 2px;
  font: 24.5px/30px "Open Sans", sans-serif;
  letter-spacing: 0.2px;
  white-space: nowrap;
}
</style>
